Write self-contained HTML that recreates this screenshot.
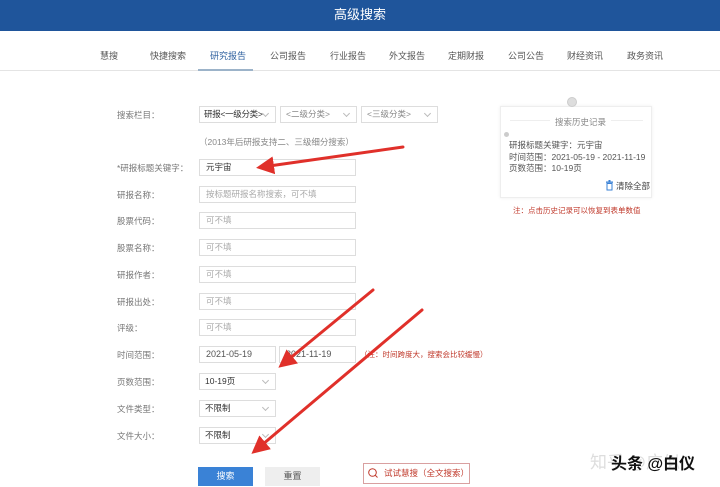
<!DOCTYPE html>
<html><head><meta charset="utf-8"><style>
*{margin:0;padding:0;box-sizing:border-box}
body{width:720px;height:487px;background:#fff;position:relative;overflow:hidden;font-family:"Liberation Sans","Noto Sans CJK SC",sans-serif;font-size:9px;color:#666}
.hd{position:absolute;left:0;top:0;width:720px;height:31px;background:#1f559b;color:#fff;font-size:13px;text-align:center;line-height:30px}
.nav{position:absolute;top:49px;font-size:9px;color:#555}
.line{position:absolute;left:0;top:70px;width:720px;height:1px;background:#e4e4e4}
.ul{position:absolute;left:198px;top:69px;width:55px;height:2px;background:#9cb3c9}
.lb{position:absolute;left:117px;font-size:8.5px;color:#777}
.in{position:absolute;left:199px;width:157px;height:17px;border:1px solid #ddd;background:#fff;font-size:8.5px;color:#aaa;padding-left:6px;line-height:15px}
.sel{position:absolute;height:17px;border:1px solid #ddd;font-size:8.5px;color:#888;padding-left:5px;line-height:15px;overflow:hidden;white-space:nowrap}
.sel:after{content:"";position:absolute;right:7px;top:4px;width:4px;height:4px;border-right:1px solid #bbb;border-bottom:1px solid #bbb;transform:rotate(45deg);background:#fff}
.dk{color:#333}
.red{color:#c0392b}
</style></head><body>
<div class="hd">高级搜索</div>
<div class="nav" style="left:100px">慧搜</div>
<div class="nav" style="left:150px">快捷搜索</div>
<div class="nav" style="left:210px;color:#2c5f9e">研究报告</div>
<div class="nav" style="left:270px">公司报告</div>
<div class="nav" style="left:330px">行业报告</div>
<div class="nav" style="left:389px">外文报告</div>
<div class="nav" style="left:448px">定期财报</div>
<div class="nav" style="left:508px">公司公告</div>
<div class="nav" style="left:567px">财经资讯</div>
<div class="nav" style="left:627px">政务资讯</div>
<div class="line"></div><div class="ul"></div>

<div class="lb" style="top:109px">搜索栏目：</div>
<div class="sel dk" style="left:199px;top:106px;width:77px;padding-left:4px;letter-spacing:-0.3px">研报&lt;一级分类&gt;</div>
<div class="sel" style="left:280px;top:106px;width:77px">&lt;二级分类&gt;</div>
<div class="sel" style="left:361px;top:106px;width:77px">&lt;三级分类&gt;</div>
<div style="position:absolute;left:199px;top:136px;font-size:8.5px;color:#888">（2013年后研报支持二、三级细分搜索）</div>

<div class="lb" style="top:162px">*研报标题关键字：</div><div class="in dk" style="top:159px;color:#333">元宇宙</div>
<div class="lb" style="top:189px">研报名称：</div><div class="in" style="top:186px">按标题研报名称搜索，可不填</div>
<div class="lb" style="top:215px">股票代码：</div><div class="in" style="top:212px">可不填</div>
<div class="lb" style="top:242px">股票名称：</div><div class="in" style="top:239px">可不填</div>
<div class="lb" style="top:269px">研报作者：</div><div class="in" style="top:266px">可不填</div>
<div class="lb" style="top:296px">研报出处：</div><div class="in" style="top:293px">可不填</div>
<div class="lb" style="top:322px">评级：</div><div class="in" style="top:319px">可不填</div>
<div class="lb" style="top:349px">时间范围：</div>
<div class="in" style="top:346px;width:77px;color:#555;font-size:9px">2021-05-19</div>
<div class="in" style="top:346px;left:279px;width:77px;color:#555;font-size:9px">2021-11-19</div>
<div class="red" style="position:absolute;left:360px;top:349px;font-size:7.5px">（注：时间跨度大，搜索会比较缓慢）</div>
<div class="lb" style="top:376px">页数范围：</div><div class="sel dk" style="left:199px;top:373px;width:77px">10-19页</div>
<div class="lb" style="top:403px">文件类型：</div><div class="sel dk" style="left:199px;top:400px;width:77px">不限制</div>
<div class="lb" style="top:430px">文件大小：</div><div class="sel dk" style="left:199px;top:427px;width:77px">不限制</div>

<div style="position:absolute;left:198px;top:467px;width:55px;height:19px;background:#3a82d6;color:#fff;text-align:center;line-height:19px">搜索</div>
<div style="position:absolute;left:265px;top:467px;width:55px;height:19px;background:#eee;color:#555;text-align:center;line-height:19px">重置</div>
<div style="position:absolute;left:363px;top:463px;width:107px;height:21px;border:1px solid #d9a0a0;color:#c0392b;line-height:19px;padding-left:20px;font-size:8.5px">试试慧搜（全文搜索）</div>
<svg style="position:absolute;left:367px;top:467px" width="12" height="12"><circle cx="5.5" cy="5.5" r="3.8" fill="none" stroke="#c0392b" stroke-width="1"/><line x1="8" y1="8" x2="10.5" y2="10.5" stroke="#c0392b"/></svg>

<div style="position:absolute;left:500px;top:106px;width:152px;height:92px;border:1px solid #eee;box-shadow:0 0 3px #eee"></div>
<div style="position:absolute;left:567px;top:97px;width:10px;height:10px;border-radius:50%;background:#ddd;border:1px solid #ccc"></div>
<div style="position:absolute;left:510px;top:120px;width:133px;height:1px;background:#eee"></div>
<div style="position:absolute;left:550px;top:116px;background:#fff;padding:0 5px;color:#888;font-size:8.5px">搜索历史记录</div>
<div style="position:absolute;left:504px;top:132px;width:5px;height:5px;border-radius:50%;background:#ccc"></div>
<div style="position:absolute;left:509px;top:140px;font-size:8.5px;color:#555;line-height:11.5px;white-space:nowrap">研报标题关键字：元宇宙<br>时间范围：2021-05-19 - 2021-11-19<br>页数范围：10-19页</div>
<div style="position:absolute;left:616px;top:180px;font-size:8.5px;color:#444">清除全部</div>
<svg style="position:absolute;left:605px;top:180px" width="9" height="11"><rect x="1" y="1.5" width="7" height="1.3" fill="#3a82d6"/><rect x="3.5" y="0" width="2" height="1.5" fill="#3a82d6"/><rect x="2" y="3.5" width="5" height="6.5" fill="none" stroke="#3a82d6"/></svg>
<div class="red" style="position:absolute;left:513px;top:205px;font-size:7.5px">注：点击历史记录可以恢复到表单数值</div>

<div style="position:absolute;left:590px;top:448px;font-size:17px;color:#ddd">知乎 @广似</div>
<div style="position:absolute;left:611px;top:450px;font-size:16px;color:#111;font-weight:bold;text-shadow:0 0 2px #fff">头条 @白仪</div>

<svg style="position:absolute;left:0;top:0" width="720" height="487">
<defs><marker id="a" markerWidth="6" markerHeight="6" refX="4" refY="3" orient="auto"><path d="M0,0 L6,3 L0,6 Z" fill="#e0302a"/></marker></defs>
<g stroke="#e0302a" fill="none" stroke-linecap="round">
<line x1="403" y1="147" x2="262" y2="167" stroke-width="3" marker-end="url(#a)"/>
<line x1="373" y1="290" x2="283" y2="364" stroke-width="3" marker-end="url(#a)"/>
<line x1="422" y1="310" x2="256" y2="450" stroke-width="3" marker-end="url(#a)"/>
</g></svg>
</body></html>
